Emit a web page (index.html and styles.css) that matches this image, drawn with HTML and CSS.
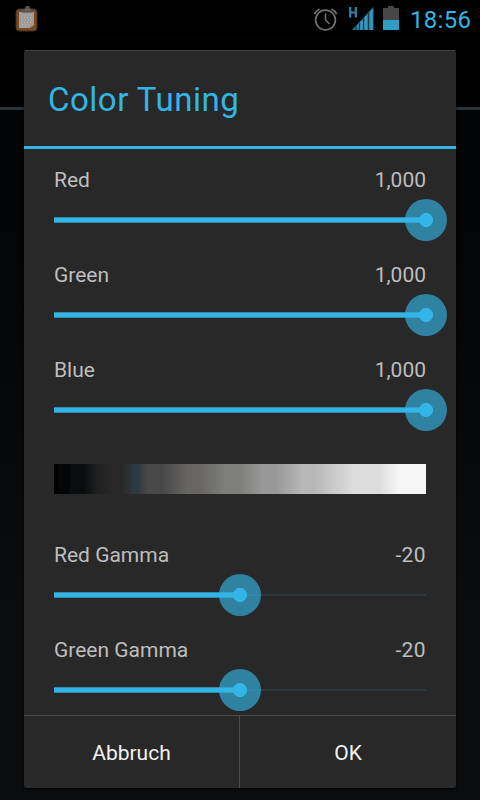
FILE: index.html
```
<!DOCTYPE html>
<html lang="de">
<head>
<meta charset="utf-8">
<title>Color Tuning</title>
<link rel="stylesheet" href="styles.css">
</head>
<body>
<div class="screen">
  <header class="status">
    <svg class="clipboard" width="24" height="28" viewBox="0 0 24 28">
      <rect x="2" y="4" width="21" height="22" rx="3" fill="#7d471b" stroke="#33302c"/>
      <path d="M5 7h15v13l-4 3H5z" fill="#9b9b9b"/>
      <path d="M8 10h11M7 12.500h11M8 15h10M7 17.500h10M8 20h8M8 22h6" stroke="#bdbdbd" stroke-width="1" stroke-dasharray="1 2"/>
      <path d="M8 7.500V4.500l3-1 1-2.500h3l1.500 2.500 2 1v3z" fill="#55524f"/>
      <path d="M11 5h5" stroke="#777"/>
    </svg>
    <div class="indicators">
      <svg width="24" height="24" viewBox="0 0 24 24" fill="none" stroke="#707070">
        <circle cx="11.500" cy="13" r="9.900" stroke-width="1.700"/>
        <path d="M11.500 6.500V13l4 4" stroke-width="1.600"/>
        <path d="M.5 7.200Q2 3.500 5.500 1.900M17.500 1.900Q21 3.500 22.700 7.200" stroke-width="1.700"/>
      </svg>
      <svg class="signal" width="25" height="24" viewBox="0 0 25 24">
        <path d="M1.200 0v10.500M6.800 0v10.500M1 5.500h6" stroke="#2d86a8" stroke-width="2.200" fill="none"/>
        <path d="M3 23 24.500 0v23z" fill="#2b7d9c"/>
        <path d="M7 19v4M10.500 16v7M14.500 11v12M19.500 6v17" stroke="#163b49" stroke-width="1"/>
        <path d="M12.500 14v9M17 9v14M22.500 3v20" stroke="#329cc3" stroke-width="2"/>
      </svg>
      <svg class="battery" width="16" height="24" viewBox="0 0 16 24">
        <path d="M0 2h5V0h6v2h5v12H0z" fill="#474747"/>
        <path d="M0 14h16v10H0z" fill="#309bc3"/>
      </svg>
      <span class="clock">18:56</span>
    </div>
  </header>
  <div class="backdrop"></div>
  <main class="dialog">
    <h1 class="title"><span>Color Tuning</span></h1>
    <div class="content">
      <section class="row"><div class="labels"><span>Red</span><span>1,000</span></div><div class="slider"><i class="fill full"></i><b class="thumb"></b></div></section>
      <section class="row"><div class="labels"><span>Green</span><span>1,000</span></div><div class="slider"><i class="fill full"></i><b class="thumb"></b></div></section>
      <section class="row"><div class="labels"><span>Blue</span><span>1,000</span></div><div class="slider"><i class="fill full"></i><b class="thumb"></b></div></section>
      <div class="ramp"></div>
      <section class="row"><div class="labels"><span>Red Gamma</span><span class="gamma">-20</span></div><div class="slider"><i class="fill"></i><b class="thumb"></b></div></section>
      <section class="row"><div class="labels"><span>Green Gamma</span><span class="gamma">-20</span></div><div class="slider"><i class="fill"></i><b class="thumb"></b></div></section>
    </div>
    <footer class="buttons"><button>Abbruch</button><button>OK</button></footer>
  </main>
</div>
</body>
</html>
```
FILE: styles.css
```
* { box-sizing: border-box; }
body { margin: 0; background: #000; font-family: Roboto, sans-serif; }
.screen { position: relative; width: 480px; height: 800px; overflow: hidden; background: #000; }
.status { height: 39px; display: flex; justify-content: space-between; padding: 5px 9px 0 14px; border-bottom: 1px solid #050505; }
.indicators { display: flex; align-items: flex-start; padding-top: 2px; }
.signal { margin-left: 11px; }
.battery { margin: -1px 0 0 9px; }
.clock { margin-left: 11px; width: 61px; color: #33b5e5; font-size: 24px; line-height: 26px; letter-spacing: .3px; white-space: nowrap; }
.backdrop { height: 693px; margin-top: 68px; border-top: 3px solid #2b3439; background: linear-gradient(#020304, #06080a 45%, #0b0d0f 85%); }
.dialog { position: absolute; left: 24px; top: 50px; width: 432px; height: 738px; display: flex; flex-direction: column; background: #282828; border-radius: 3px; box-shadow: 0 1px 3px rgba(0,0,0,.8); overflow: hidden; }
.title { height: 99px; flex: none; margin: 0; padding: 2px 24px 0; border-top: 1px solid #434343; border-bottom: 3px solid #33b5e5; display: flex; align-items: center; color: #33b5e5; font-size: 33px; font-weight: 400; letter-spacing: .5px; }
.content { height: 566px; flex: none; padding: 0 30px; overflow: hidden; }
.content { overflow: visible; }
.row { height: 95px; padding-top: 19px; }
.labels { height: 24px; display: flex; justify-content: space-between; color: #bebebe; font-size: 21px; line-height: 24px; }
.gamma { letter-spacing: .4px; }
.slider { height: 44px; margin-top: 6px; display: flex; align-items: center; background: linear-gradient(#2d383c, #2d383c) center / 100% 2px no-repeat; }
.fill { flex: none; width: 186px; height: 6px; background: #33b5e5; border: solid #2e89ab; border-width: 1px 0; }
.fill.full { width: 372px; }
.thumb { flex: none; width: 42.6px; height: 42.6px; margin-left: -21.3px; border-radius: 50%; background: radial-gradient(circle, #33b5e5 6.700px, rgba(51,181,229,.64) 7.300px); }
.ramp { height: 30px; margin: 30px 0; background: linear-gradient(90deg, #000 0 4px, #040506 4px 16px, #0a0c0e 16px 29px, #202020 44px, #282828 58px 68px, #2d3a42 80px 84px, #484848 94px 108px, #666562 134px 144px, #7d7d7b 171px 186px, #989898 208px 222px, #b7b7b7 248px 260px, #ddd 300px 325px, #f5f5f5 344px); }
.buttons { flex: 1; display: flex; border-top: 1px solid #4c4c4c; }
.buttons button { width: 216px; padding: 2px 0 0; border: 0; border-right: 1px solid #4c4c4c; background: none; color: #f3f3f3; font: 21px/24px Roboto, sans-serif; }
.buttons button:last-child { border-right: 0; }
```
